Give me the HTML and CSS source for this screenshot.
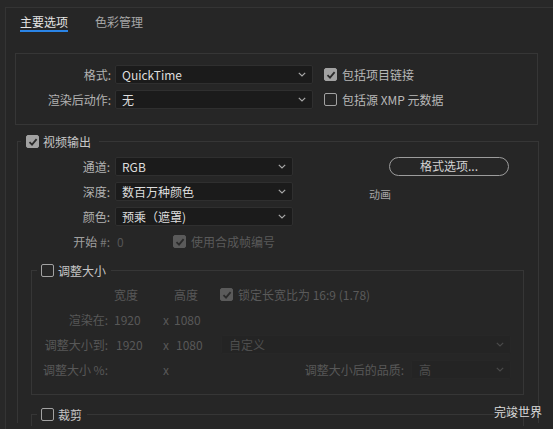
FILE: index.html
```html
<!DOCTYPE html>
<html lang="zh-CN">
<head>
<meta charset="utf-8">
<title>导出设置</title>
<link rel="stylesheet" href="styles.css">
</head>
<body>
<div class="frame">
  <div class="tabs">
    <div class="tab active">主要选项</div>
    <div class="tab">色彩管理</div>
  </div>

  <div class="fmtbox">
    <div class="frow">
      <div class="flbl">格式:</div>
      <div class="sel wf"><span>QuickTime</span><svg class="chev" width="8" height="5" viewBox="0 0 8 5"><polyline points="0.8,0.8 4,4 7.2,0.8"/></svg></div>
      <div class="chk"><span class="box on"><svg width="10" height="10" viewBox="0 0 10 10"><polyline points="1.5,5.2 4,7.6 8.6,2.2"/></svg></span>包括项目链接</div>
    </div>
    <div class="frow">
      <div class="flbl">渲染后动作:</div>
      <div class="sel wf"><span>无</span><svg class="chev" width="8" height="5" viewBox="0 0 8 5"><polyline points="0.8,0.8 4,4 7.2,0.8"/></svg></div>
      <div class="chk"><span class="box"></span>包括源 XMP 元数据</div>
    </div>
  </div>

  <fieldset class="video">
    <legend><span class="box on"><svg width="10" height="10" viewBox="0 0 10 10"><polyline points="1.5,5.2 4,7.6 8.6,2.2"/></svg></span>视频输出</legend>
    <div class="vbody">
      <div class="vleft">
        <div class="vrow">
          <div class="vlbl">通道:</div>
          <div class="sel wv"><span>RGB</span><svg class="chev" width="8" height="5" viewBox="0 0 8 5"><polyline points="0.8,0.8 4,4 7.2,0.8"/></svg></div>
        </div>
        <div class="vrow">
          <div class="vlbl">深度:</div>
          <div class="sel wv"><span>数百万种颜色</span><svg class="chev" width="8" height="5" viewBox="0 0 8 5"><polyline points="0.8,0.8 4,4 7.2,0.8"/></svg></div>
        </div>
        <div class="vrow">
          <div class="vlbl">颜色:</div>
          <div class="sel wv"><span>预乘（遮罩)</span><svg class="chev" width="8" height="5" viewBox="0 0 8 5"><polyline points="0.8,0.8 4,4 7.2,0.8"/></svg></div>
        </div>
      </div>
      <div class="vright">
        <div class="btn">格式选项...</div>
        <div class="codec">动画</div>
      </div>
    </div>
    <div class="vrow startrow">
      <div class="vlbl">开始 <span class="hash">#:</span></div>
      <span class="zero">0</span>
      <div class="chk dis"><span class="box on off"><svg width="10" height="10" viewBox="0 0 10 10"><polyline points="1.5,5.2 4,7.6 8.6,2.2"/></svg></span>使用合成帧编号</div>
    </div>

    <fieldset class="sub resize">
      <legend><span class="box"></span>调整大小</legend>
      <div class="rgrid">
        <div></div><div class="c2">宽度</div><div></div><div class="c4">高度</div>
        <div class="chk dis lock"><span class="box on off"><svg width="10" height="10" viewBox="0 0 10 10"><polyline points="1.5,5.2 4,7.6 8.6,2.2"/></svg></span>锁定长宽比为 16:9 (1.78)</div>

        <div class="rl">渲染在:</div><div class="c2">1920</div><div class="cx">x</div><div class="c4">1080</div><div></div>

        <div class="rl">调整大小到:</div><div class="c2 n2">1920</div><div class="cx">x</div><div class="c4 n2">1080</div>
        <div class="c5"><div class="dsel wcustom"><span>自定义</span><svg class="chev" width="8" height="5" viewBox="0 0 8 5"><polyline points="0.8,0.8 4,4 7.2,0.8"/></svg></div></div>

        <div class="rl">调整大小 %:</div><div></div><div class="cx">x</div><div></div>
        <div class="c5"><span class="qlbl">调整大小后的品质:</span><div class="dsel wq"><span>高</span><svg class="chev" width="8" height="5" viewBox="0 0 8 5"><polyline points="0.8,0.8 4,4 7.2,0.8"/></svg></div></div>
      </div>
    </fieldset>

    <fieldset class="sub crop">
      <legend><span class="box"></span>裁剪</legend>
    </fieldset>
  </fieldset>
</div>
<div class="wm">完竣世界</div>
</body>
</html>
```

FILE: styles.css
```css
html, body {
  margin: 0;
  padding: 0;
}
body {
  width: 553px;
  height: 429px;
  overflow: hidden;
  position: relative;
  background: #282828;
  font-family: "Noto Sans CJK SC", "Noto Sans", sans-serif;
  font-size: 12px;
  line-height: 17px;
  color: #b2b2b2;
}
.frame {
  margin: 7px 0 0 5px;
  height: 421px;
  overflow: hidden;
  background: #262626;
  border-left: 1px solid #343434;
  border-top: 1px solid #343434;
}
.tabs {
  display: flex;
  gap: 27px;
  padding-left: 14px;
}
.tab {
  padding-top: 5px;
  border-bottom: 2px solid transparent;
  color: #a6a6a6;
}
.tab.active {
  color: #e4e4e4;
  border-bottom-color: #2a84e6;
}
.fmtbox {
  margin: 21px 0 0 9px;
  width: 523px;
  height: 72px;
  box-sizing: border-box;
  border: 1px solid #363636;
  padding-top: 11px;
}
.frow {
  display: flex;
  align-items: center;
  height: 19px;
}
.frow + .frow {
  margin-top: 6px;
}
.flbl {
  width: 95px;
  margin-right: 4px;
  text-align: right;
}
.sel, .dsel {
  box-sizing: border-box;
  height: 19px;
  display: flex;
  align-items: center;
  justify-content: space-between;
  padding: 0 6px 0 6px;
  background: #1b1b1b;
  border: 1px solid #2f2f2f;
  border-radius: 2px;
  color: #dedede;
}
.chev {
  display: block;
  fill: none;
  stroke: #a8a8a8;
  stroke-width: 1.2;
}
.sel.wf {
  width: 198px;
}
.sel.wv {
  width: 178px;
}
.chk {
  display: flex;
  align-items: center;
  gap: 5px;
  color: #b8b8b8;
}
.frow .chk {
  margin-left: 11px;
}
.box {
  display: flex;
  align-items: center;
  justify-content: center;
  width: 13px;
  height: 13px;
  box-sizing: border-box;
  border-radius: 2px;
  border: 1.5px solid #a2a2a2;
}
.box.on {
  background: #a2a2a2;
}
.box svg {
  display: block;
  fill: none;
  stroke: #2a2a2a;
  stroke-width: 1.8;
}
.box.off {
  background: #5a5a5a;
  border-color: #5a5a5a;
}
.chk.dis {
  color: #5a5a5a;
}

.video {
  margin: 8px 0 0 11px;
  width: 522px;
  height: 290px;
  box-sizing: border-box;
  border: 1px solid #363636;
  border-bottom: none;
  padding: 0;
  min-inline-size: 0;
}
legend {
  display: flex;
  align-items: center;
  gap: 4px;
  margin-left: 3px;
  padding: 0 8px 0 5px;
  color: #c6c6c6;
}
.vbody {
  display: flex;
  padding-top: 7px;
}
.vleft {
  width: 275px;
}
.vrow {
  display: flex;
  align-items: center;
  height: 19px;
}
.vrow + .vrow {
  margin-top: 6px;
}
.vlbl {
  width: 92px;
  margin-right: 5px;
  text-align: right;
}
.vright {
  display: flex;
  flex-direction: column;
  align-items: flex-start;
}
.btn {
  box-sizing: border-box;
  margin-left: 96px;
  width: 120px;
  height: 19px;
  border: 1.5px solid #9c9c9c;
  border-radius: 10px;
  text-align: center;
  line-height: 16px;
  color: #d2d2d2;
}
.codec {
  margin: 10px 0 0 76px;
  font-size: 11px;
  color: #a4a4a4;
}
.startrow {
  margin-top: 6px;
}
.startrow .vlbl {
  color: #a0a0a0;
  margin-right: 7px;
}
.hash {
  color: #7a7a7a;
}
.zero {
  width: 56px;
  color: #555;
}

.sub {
  margin: 11px 0 0 13px;
  width: 493px;
  box-sizing: border-box;
  border: 1px solid #363636;
  min-inline-size: 0;
}
.sub legend {
  margin-left: 5px;
  padding: 0 5px 0 4px;
}
.resize {
  padding: 3px 0 12px 0;
}
.crop {
  padding: 0;
  height: 20px;
  border-bottom: none;
}
.rgrid {
  display: grid;
  grid-template-columns: 78px 50px 12px 48px 1fr;
  grid-auto-rows: 25px;
  align-items: center;
  color: #585858;
}
.rl {
  text-align: right;
  padding-right: 2px;
}
.c2 {
  padding-left: 4px;
}
.n2 {
  padding-left: 6px;
}
.cx {
  padding-left: 3px;
}
.c4 {
  padding-left: 2px;
}
.c4.n2 {
  padding-left: 4px;
}
.c5 {
  display: flex;
  align-items: center;
  justify-content: flex-end;
  padding-right: 12px;
}
.dsel {
  background: #242424;
  border-color: #272727;
  color: #4e4e4e;
  padding-left: 7px;
}
.dsel .chev {
  stroke: #4a4a4a;
}
.wcustom {
  width: 290px;
}
.wq {
  width: 100px;
  margin-left: 7px;
}
.qlbl {
  color: #585858;
}
.wm {
  position: absolute;
  left: 494px;
  top: 403px;
  color: #dcdcdc;
  font-size: 12px;
}
```
